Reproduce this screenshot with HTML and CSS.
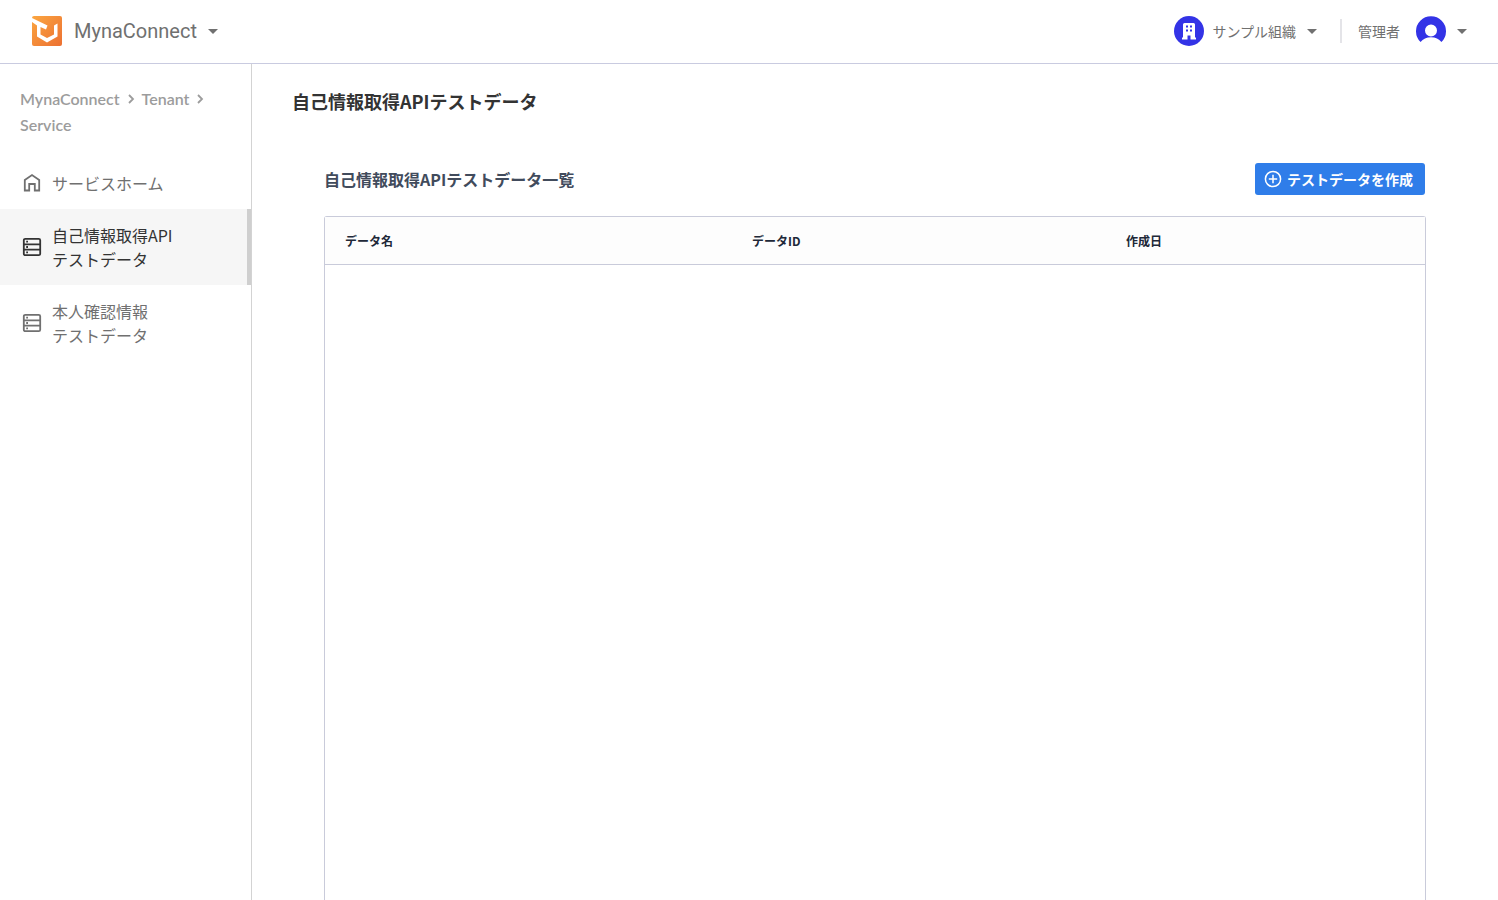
FILE: index.html
```html
<!DOCTYPE html>
<html lang="ja">
<head>
<meta charset="utf-8">
<title>MynaConnect</title>
<link rel="stylesheet" href="styles.css">
</head>
<body>
<header class="header">
  <button class="menu-button brand" type="button">
    <svg class="brand-logo" viewBox="0 0 30 30" aria-hidden="true">
      <defs>
        <linearGradient id="brand-fill" x1="0" y1="0" x2="1" y2="1">
          <stop offset="0" stop-color="#fba640"/>
          <stop offset="1" stop-color="#ec7032"/>
        </linearGradient>
      </defs>
      <rect width="30" height="30" rx="2" fill="url(#brand-fill)"/>
      <path fill="#fff" d="M0 2L15.500 9.500L14 13.500L8.500 11V18.500L15 22L22 18.500V9.500L25.500 7.500V20.500L15 26.500L5 20.500V9.500L0 6Z"/>
    </svg>
    <span class="brand-name">MynaConnect</span>
    <svg class="caret" viewBox="0 0 10 5" aria-hidden="true"><path d="M0 0H10L5 5Z" fill="currentColor"/></svg>
  </button>
  <div class="account">
    <button class="menu-button organization" type="button">
      <svg class="avatar" viewBox="0 0 30 30" aria-hidden="true">
        <circle cx="15" cy="15" r="15" fill="#3333e6"/>
        <path fill="#fff" fill-rule="evenodd" d="M10.500 7H19.500Q21 7 21 8.500V21.500H22V23.500H16.500V19.500H13.500V23.500H8V21.500H9V8.500Q9 7 10.500 7ZM12 9.500V11.500H14V9.500ZM16 9.500V11.500H18V9.500ZM12 13.500V15.500H14V13.500ZM16 13.500V15.500H18V13.500Z"/>
      </svg>
      <span>サンプル組織</span>
      <svg class="caret" viewBox="0 0 10 5" aria-hidden="true"><path d="M0 0H10L5 5Z" fill="currentColor"/></svg>
    </button>
    <span class="separator"></span>
    <button class="menu-button user" type="button">
      <span>管理者</span>
      <svg class="avatar" viewBox="0 0 30 30" aria-hidden="true">
        <path fill="#3333e6" fill-rule="evenodd" d="M4.600 26A15 15 0 1 1 25.400 26C23 23 19.500 21.300 15 21.300S7 23 4.600 26ZM15 8.500A6 6 0 1 0 15 20.500A6 6 0 1 0 15 8.500Z"/>
      </svg>
      <svg class="caret" viewBox="0 0 10 5" aria-hidden="true"><path d="M0 0H10L5 5Z" fill="currentColor"/></svg>
    </button>
  </div>
</header>
<div class="layout">
  <aside class="sidebar">
    <nav class="breadcrumb" aria-label="パンくずリスト">
      <a href="#">MynaConnect</a>
      <svg class="chevron" viewBox="0 0 8 10" aria-hidden="true"><path d="M2 1L6 5L2 9" fill="none" stroke="currentColor" stroke-width="1.800"/></svg>
      <a href="#">Tenant</a>
      <svg class="chevron" viewBox="0 0 8 10" aria-hidden="true"><path d="M2 1L6 5L2 9" fill="none" stroke="currentColor" stroke-width="1.800"/></svg>
      <a href="#">Service</a>
    </nav>
    <nav class="side-nav" aria-label="サービス">
      <a class="nav-item" href="#">
        <svg class="nav-icon" viewBox="0 0 20 20" fill="none" stroke="currentColor" stroke-width="1.800" aria-hidden="true"><path d="M2.800 17.500V7L10 2L17.200 7V17.500H12.800V11H7.200V17.500Z"/></svg>
        <span>サービスホーム</span>
      </a>
      <a class="nav-item nav-item-active" href="#" aria-current="page">
        <svg class="nav-icon" viewBox="0 0 20 20" fill="none" stroke="currentColor" stroke-width="1.800" aria-hidden="true"><rect x="1.800" y="1.800" width="16.400" height="16.400" rx="1.500"/><path d="M2 7.300H18M2 12.700H18M4.200 4.600H6M4.200 10H6M4.200 15.400H6"/></svg>
        <span>自己情報取得API<br>テストデータ</span>
      </a>
      <a class="nav-item" href="#">
        <svg class="nav-icon" viewBox="0 0 20 20" fill="none" stroke="currentColor" stroke-width="1.800" aria-hidden="true"><rect x="1.800" y="1.800" width="16.400" height="16.400" rx="1.500"/><path d="M2 7.300H18M2 12.700H18M4.200 4.600H6M4.200 10H6M4.200 15.400H6"/></svg>
        <span>本人確認情報<br>テストデータ</span>
      </a>
    </nav>
  </aside>
  <main class="content">
    <h1 class="page-title">自己情報取得APIテストデータ</h1>
    <section class="list">
      <div class="list-header">
        <h2 class="list-title">自己情報取得APIテストデータ一覧</h2>
        <button class="create-button" type="button">
          <svg class="create-icon" viewBox="0 0 20 20" fill="none" stroke="currentColor" stroke-width="1.500" aria-hidden="true"><circle cx="10" cy="10" r="7.600"/><path d="M10 5.800V14.200M5.800 10H14.200"/></svg>
          <span>テストデータを作成</span>
        </button>
      </div>
      <div class="table-frame">
        <table class="data-table">
          <thead>
            <tr>
              <th class="col-name" scope="col">データ名</th>
              <th class="col-id" scope="col">データID</th>
              <th class="col-date" scope="col">作成日</th>
            </tr>
          </thead>
          <tbody></tbody>
        </table>
      </div>
    </section>
  </main>
</div>
</body>
</html>
```
FILE: styles.css
```css
* {
  box-sizing: border-box;
}

body {
  display: flex;
  flex-direction: column;
  height: 100vh;
  margin: 0;
  overflow: hidden;
  background: #fff;
  color: #333;
  font-family: "Noto Sans CJK JP", sans-serif;
}

a {
  color: inherit;
  text-decoration: none;
}

button {
  border: 0;
  font-family: inherit;
  cursor: pointer;
}

svg {
  display: block;
  flex: none;
}

.header {
  display: flex;
  flex: none;
  align-items: center;
  justify-content: space-between;
  height: 64px;
  padding: 0 31px 1px 32px;
  border-bottom: 1px solid #c9cbe0;
}

.menu-button {
  display: flex;
  align-items: center;
  padding: 0;
  background: none;
  color: #707070;
  font-size: 14px;
  line-height: 24px;
}

.brand-logo,
.avatar {
  width: 30px;
  height: 30px;
}

.brand-name {
  margin: 0 11px 0 12px;
  font-family: Roboto, sans-serif;
  font-size: 20px;
}

.caret {
  width: 10px;
  height: 5px;
}

.account {
  display: flex;
  align-items: center;
}

.organization {
  gap: 8px;
}

.organization .caret {
  margin-left: 3px;
}

.separator {
  width: 2px;
  height: 24px;
  margin: 0 16px 0 23px;
  background: #e4e4e8;
}

.user {
  gap: 16px;
}

.user .caret {
  margin-left: -5px;
}

.layout {
  display: flex;
  flex: 1;
  min-height: 0;
}

.sidebar {
  flex: none;
  width: 252px;
  border-right: 1px solid #d3d3d3;
}

.breadcrumb {
  display: flex;
  flex-wrap: wrap;
  align-items: center;
  column-gap: 7px;
  padding: 22px 20px 19px;
  color: #9c9c9c;
  font-family: Lato, sans-serif;
  font-size: 16px;
  font-weight: 600;
  line-height: 26px;
}

.chevron {
  width: 8px;
  height: 10px;
}

.nav-item {
  display: flex;
  align-items: center;
  gap: 10px;
  padding: 14px 22px;
  color: #707070;
  font-size: 16px;
  line-height: 24px;
}

.nav-item-active {
  border-right: 4px solid #cfcfcf;
  background: #f6f6f6;
  color: #333;
}

.nav-icon {
  width: 20px;
  height: 20px;
}

.content {
  display: flex;
  flex: 1;
  flex-direction: column;
  min-width: 0;
  padding: 23px 40px 0;
}

.page-title {
  margin: 0;
  font-size: 18px;
  font-weight: 700;
  line-height: 28px;
}

.list {
  display: flex;
  flex: 1;
  flex-direction: column;
  padding: 48px 32px 0;
}

.list-header {
  display: flex;
  align-items: center;
  justify-content: space-between;
  padding-right: 1px;
}

.list-title {
  margin: 0;
  color: #414b5c;
  font-size: 16px;
  font-weight: 700;
  line-height: 32px;
}

.create-button {
  display: flex;
  align-items: center;
  gap: 4px;
  height: 32px;
  padding: 0 12px 0 8px;
  border-radius: 3px;
  background: #2f7de9;
  color: #fff;
  font-size: 14px;
  font-weight: 700;
}

.create-icon {
  width: 20px;
  height: 20px;
}

.table-frame {
  flex: 1;
  margin-top: 21px;
  border: 1px solid #c9cbda;
  border-bottom: 0;
  border-radius: 3px 3px 0 0;
}

.data-table {
  width: 100%;
  border-collapse: separate;
  border-spacing: 0;
  table-layout: fixed;
}

.data-table th {
  height: 48px;
  padding: 0 20px;
  border-bottom: 1px solid #c9cbda;
  background: #fdfdfd;
  color: #202838;
  font-size: 12px;
  font-weight: 700;
  line-height: 18px;
  text-align: left;
}

.col-name {
  width: 37%;
}

.col-id {
  width: 34%;
}

.col-date {
  width: 29%;
}
```
